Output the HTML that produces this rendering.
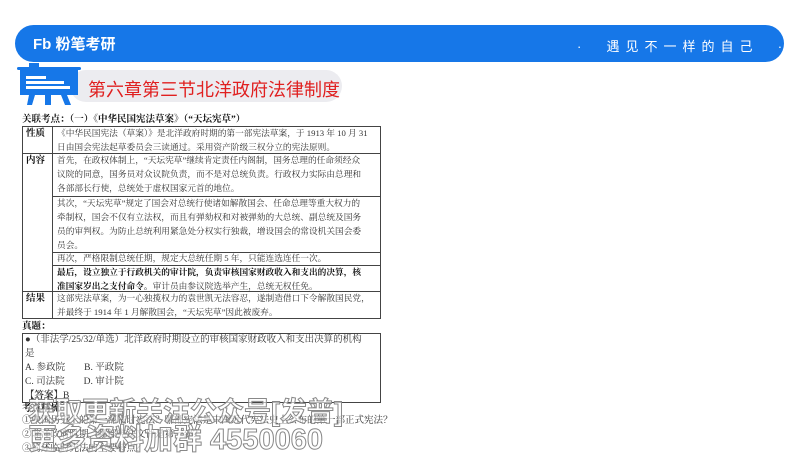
<!DOCTYPE html>
<html><head><meta charset="utf-8"><style>
*{margin:0;padding:0;box-sizing:border-box}
body{width:800px;height:450px;overflow:hidden;background:#fff;position:relative;font-family:"Liberation Serif","Noto Serif CJK SC",serif;color:#333}
.abs{position:absolute}
.ban{left:15px;top:25px;width:769px;height:37px;background:#1677e8;border-radius:19px}
.logo{left:33px;top:33px;color:#fff;font:bold 15px "Liberation Sans","Noto Sans CJK SC",sans-serif}
.slogan{left:577px;top:36px;color:#fff;font:13px "Liberation Sans","Noto Sans CJK SC",sans-serif;letter-spacing:6px;white-space:pre}
.pill{left:70px;top:70px;width:272px;height:32px;background:#ececf0;border-radius:16px}
.title{left:88px;top:76px;color:#e02020;font:18px "Liberation Sans","Noto Sans CJK SC",sans-serif}
.t{font-size:8.7px;line-height:14px;white-space:nowrap}
.q{font-size:9.5px;line-height:14px;white-space:nowrap}
.b{font-weight:bold;color:#111}
.box{border:1px solid #444}
.line{background:#444}
.wm{font:bold 27px "Liberation Sans","Noto Sans CJK SC",sans-serif;color:rgba(255,255,255,.6);-webkit-text-stroke:1px #888;white-space:nowrap}
</style></head><body>
<div class="abs ban"></div>
<div class="abs logo">Fb 粉笔考研</div>
<div class="abs slogan">·  遇见不一样的自己  ·</div>
<div class="abs pill"></div>
<svg class="abs" style="left:17px;top:63px" width="64" height="42" viewBox="0 0 64 42">
<rect x="12" y="0" width="10" height="4" fill="#1677e8"/>
<rect x="0" y="4" width="64" height="3" rx="1.5" fill="#1677e8"/>
<rect x="3" y="7" width="58" height="25" fill="#1677e8"/>
<rect x="9" y="13" width="20" height="3" fill="#fff"/>
<rect x="9" y="18" width="38" height="3" fill="#fff"/>
<rect x="9" y="23" width="44" height="3" fill="#fff"/>
<polygon points="12,32 18,32 15,42 10,42" fill="#1677e8"/>
<polygon points="28,32 34,32 34,42 28,42" fill="#1677e8"/>
<polygon points="44,32 50,32 54,42 48,42" fill="#1677e8"/>
</svg>
<div class="abs title">第六章第三节北洋政府法律制度</div>

<div class="abs t b" style="left:22px;top:113px;font-size:9.5px">关联考点：（一）《中华民国宪法草案》（“天坛宪草”）</div>
<div class="abs box" style="left:22px;top:126px;width:359px;height:193px"></div>
<div class="abs line" style="left:52px;top:126px;width:1px;height:193px"></div>
<div class="abs line" style="left:22px;top:153px;width:359px;height:1px"></div>
<div class="abs line" style="left:52px;top:196px;width:329px;height:1px"></div>
<div class="abs line" style="left:52px;top:252px;width:329px;height:1px"></div>
<div class="abs line" style="left:52px;top:265px;width:329px;height:1px"></div>
<div class="abs line" style="left:22px;top:291px;width:359px;height:1px"></div>
<div class="abs t b" style="left:26px;top:127px;font-size:9.5px">性质</div>
<div class="abs t b" style="left:26px;top:154px;font-size:9.5px">内容</div>
<div class="abs t b" style="left:26px;top:292px;font-size:9.5px">结果</div>
<div class="abs t" style="left:57px;top:126px">《中华民国宪法（草案）》是北洋政府时期的第一部宪法草案，于 1913 年 10 月 31<br>日由国会宪法起草委员会三读通过。采用资产阶级三权分立的宪法原则。</div>
<div class="abs t" style="left:57px;top:153px">首先，在政权体制上，“天坛宪草”继续肯定责任内阁制，国务总理的任命须经众<br>议院的同意，国务员对众议院负责，而不是对总统负责。行政权力实际由总理和<br>各部部长行使，总统处于虚权国家元首的地位。</div>
<div class="abs t" style="left:57px;top:196px">其次，“天坛宪草”规定了国会对总统行使诸如解散国会、任命总理等重大权力的<br>牵制权，国会不仅有立法权，而且有弹劾权和对被弹劾的大总统、副总统及国务<br>员的审判权。为防止总统利用紧急处分权实行独裁，增设国会的常设机关国会委<br>员会。</div>
<div class="abs t" style="left:57px;top:251px">再次，严格限制总统任期，规定大总统任期 5 年，只能连选连任一次。</div>
<div class="abs t" style="left:57px;top:265px"><span class="b">最后，设立独立于行政机关的审计院，负责审核国家财政收入和支出的决算，核<br>准国家岁出之支付命令。</span>审计员由参议院选举产生，总统无权任免。</div>
<div class="abs t" style="left:57px;top:291px">这部宪法草案，为一心独揽权力的袁世凯无法容忍，遂制造借口下令解散国民党，<br>并最终于 1914 年 1 月解散国会，“天坛宪草”因此被废弃。</div>

<div class="abs q b" style="left:22px;top:320px">真题：</div>
<div class="abs box" style="left:22px;top:333px;width:359px;height:70px"></div>
<div class="abs q" style="left:25px;top:333px">●（非法学/25/32/单选）北洋政府时期设立的审核国家财政收入和支出决算的机构<br>是<br>A. 参政院　　B. 平政院<br>C. 司法院　　D. 审计院<br><b>【答案】</b>B</div>
<div class="abs q b" style="left:22px;top:402px">考点精梳</div>
<div class="abs q" style="left:22px;top:414px">①中国历史上的第一部临时宪法？哪部宪法是中国近代宪法史上公布的第一部正式宪法？<br>②北洋政府时期，哪部宪法文件是第一部？<br>③简述临时宪法的主要特点？</div>
<div class="abs wm" style="left:28px;top:390px">获取更新关注公众号[发普]</div>
<div class="abs wm" style="left:28px;top:416px;font-size:29px">更多资料加群 4550060</div>
</body></html>
